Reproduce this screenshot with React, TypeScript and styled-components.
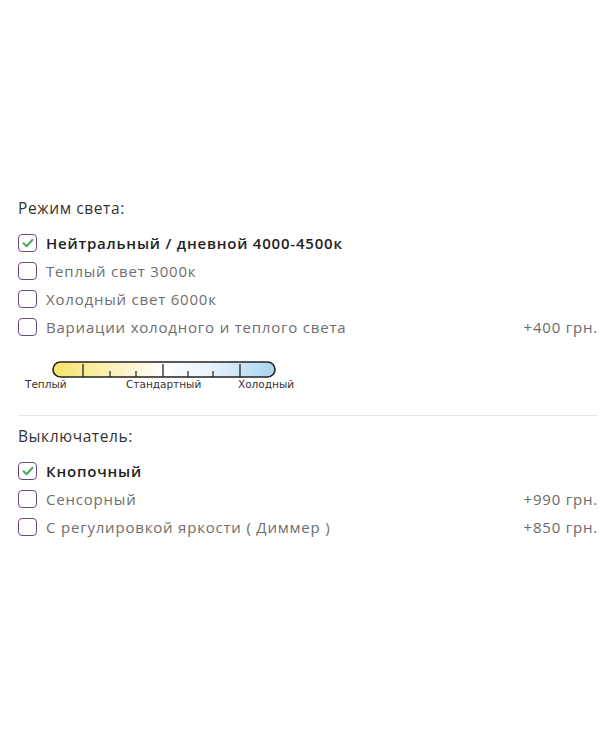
import React from 'react';
import styled, { createGlobalStyle } from 'styled-components';

const GlobalStyle = createGlobalStyle`
  html, body {
    margin: 0;
    padding: 0;
    background: #ffffff;
  }
  body {
    font-family: 'Open Sans', 'Noto Sans', Arial, sans-serif;
  }
`;

interface Option {
  label: string;
  price?: string;
  checked?: boolean;
}

const lightModes: Option[] = [
  { label: 'Нейтральный / дневной 4000-4500к', checked: true },
  { label: 'Теплый свет 3000к' },
  { label: 'Холодный свет 6000к' },
  { label: 'Вариации холодного и теплого света', price: '+400 грн.' },
];

const switches: Option[] = [
  { label: 'Кнопочный', checked: true },
  { label: 'Сенсорный', price: '+990 грн.' },
  { label: 'С регулировкой яркости ( Диммер )', price: '+850 грн.' },
];

const CheckBox = ({ checked }: { checked?: boolean }) => (
  <Box>
    {checked && (
      <svg width='12' height='10' viewBox='0 0 12 10'>
        <path
          d='M1.5 5.2 L4.6 8.2 L10.5 1.8'
          fill='none'
          stroke='#4aa95a'
          strokeWidth='2'
          strokeLinecap='round'
          strokeLinejoin='round'
        />
      </svg>
    )}
  </Box>
);

const OptionRow = ({ option }: { option: Option }) => (
  <Row>
    <CheckBox checked={option.checked} />
    <Label $checked={option.checked}>{option.label}</Label>
    {option.price && <Price>{option.price}</Price>}
  </Row>
);

// warm -> neutral -> cold ruler under the light mode options
const TemperatureScale = () => (
  <Scale>
    <svg width='224' height='17' viewBox='0 0 224 17'>
      <defs>
        <linearGradient id='temp' x1='0' x2='1' y1='0' y2='0'>
          <stop offset='0' stopColor='#f6e36a' />
          <stop offset='0.3' stopColor='#fbf3c4' />
          <stop offset='0.5' stopColor='#ffffff' />
          <stop offset='0.72' stopColor='#e6f2fa' />
          <stop offset='1' stopColor='#a9d4f0' />
        </linearGradient>
      </defs>
      <rect
        x='1'
        y='1'
        width='222'
        height='15'
        rx='7.5'
        fill='url(#temp)'
        stroke='#222'
        strokeWidth='1.6'
      />
      {[31, 111, 188].map((x) => (
        <line key={x} x1={x} x2={x} y1='3' y2='16' stroke='#222' strokeWidth='1.3' />
      ))}
      {[58, 84, 136, 161].map((x) => (
        <line key={x} x1={x} x2={x} y1='10' y2='16' stroke='#222' strokeWidth='1.2' />
      ))}
    </svg>
    <ScaleLabels>
      <ScaleLabel>Теплый</ScaleLabel>
      <ScaleLabel>Стандартный</ScaleLabel>
      <ScaleLabel>Холодный</ScaleLabel>
    </ScaleLabels>
  </Scale>
);

const App: React.FC = () => (
  <>
    <GlobalStyle />
    <Page>
      <Section>
        <Title>Режим света:</Title>
        <List>
          {lightModes.map((o) => (
            <OptionRow key={o.label} option={o} />
          ))}
        </List>
        <TemperatureScale />
      </Section>
      <Divider />
      <Section>
        <Title>Выключатель:</Title>
        <List>
          {switches.map((o) => (
            <OptionRow key={o.label} option={o} />
          ))}
        </List>
      </Section>
    </Page>
  </>
);

const Page = styled.div`
  padding: 198px 2px 0 18px;
  width: 580px;
`;

const Section = styled.section`
  display: flex;
  flex-direction: column;
`;

const Title = styled.h3`
  margin: 0 0 11px;
  font-size: 15.5px;
  letter-spacing: 0.6px;
  line-height: 20px;
  font-weight: 500;
  color: #333;
`;

const List = styled.div`
  display: flex;
  flex-direction: column;
`;

const Row = styled.div`
  display: flex;
  align-items: center;
  height: 28px;
`;

const Box = styled.span`
  box-sizing: border-box;
  width: 19px;
  height: 18px;
  flex-shrink: 0;
  border: 1.5px solid #6a4a86;
  border-radius: 4px;
  display: flex;
  align-items: center;
  justify-content: center;
  margin-right: 9px;
`;

const Label = styled.span<{ $checked?: boolean }>`
  font-size: 15px;
  letter-spacing: 0.8px;
  font-weight: ${({ $checked }) => ($checked ? 600 : 400)};
  color: ${({ $checked }) => ($checked ? '#222' : '#6e6e6e')};
`;

const Price = styled.span`
  margin-left: auto;
  font-size: 15px;
  letter-spacing: 0.8px;
  color: #6a6a6a;
`;

const Scale = styled.div`
  display: flex;
  flex-direction: column;
  align-items: flex-start;
  margin: 20px 0 0 7px;
  svg {
    margin-left: 27px;
    display: block;
  }
`;

const ScaleLabels = styled.div`
  display: grid;
  grid-template-columns: 101px 112px auto;
  margin-top: 0;
`;

const ScaleLabel = styled.span`
  font-family: 'DejaVu Sans', Verdana, sans-serif;
  font-size: 10.5px;
  line-height: 13px;
  color: #333;
`;

const Divider = styled.hr`
  border: none;
  border-top: 1px solid #e6e6e6;
  margin: 24px 0 10px;
  width: 580px;
`;

export default App;
